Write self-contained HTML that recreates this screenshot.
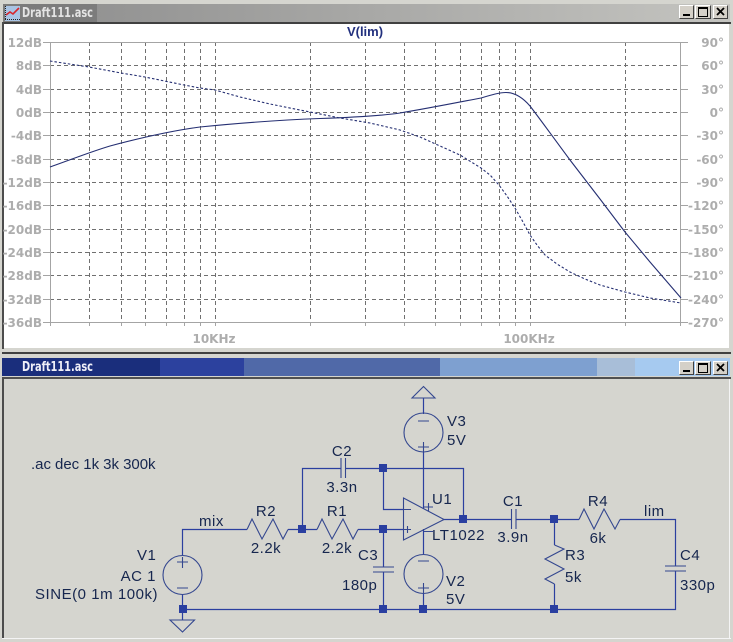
<!DOCTYPE html>
<html><head><meta charset="utf-8"><title>Draft111.asc</title>
<style>
html,body{margin:0;padding:0;background:#d5d5cf;width:733px;height:642px;overflow:hidden}
svg{display:block;position:absolute;left:0;top:0}
.ax{font:bold 12px "DejaVu Sans","Liberation Sans",sans-serif;fill:#adadad}
.s{font:15px "Liberation Sans",sans-serif;fill:#16264e;letter-spacing:.5px}
.t{font:bold 13px "DejaVu Sans","Liberation Sans",sans-serif}
</style></head><body>
<svg width="733" height="642" viewBox="0 0 733 642">
<defs>
<linearGradient id="g" x1="0" x2="1" y1="0" y2="0"><stop offset="0" stop-color="#8c8c8c"/><stop offset="1" stop-color="#c4c4c0"/></linearGradient>
</defs>
<rect width="733" height="642" fill="#d5d5cf"/>
<!-- top window -->
<rect x="3" y="4" width="727" height="18" fill="url(#g)"/>
<rect x="3" y="4" width="94" height="18" fill="#7c7c7c"/>
<rect x="2" y="22" width="729" height="2" fill="#404040"/>
<rect x="2" y="22" width="2" height="327" fill="#4c4c4c"/>
<rect x="4" y="24" width="725" height="324" fill="#fff"/>
<rect x="5" y="6" width="15" height="15" fill="#a9c4e4"/>
<path d="M6 15L10 12L13 14L19 8" fill="none" stroke="#d8262c" stroke-width="1.6"/>
<path d="M5 19.500H20" stroke="#222" stroke-dasharray="1 1"/>
<path d="M5.500 6V20" stroke="#222" stroke-dasharray="1 1"/>
<text class="t" x="22" y="17" fill="#e4e4e4" textLength="71" lengthAdjust="spacingAndGlyphs">Draft111.asc</text>
<!-- grid -->
<g stroke="#707070" stroke-width="1" stroke-dasharray="4 3" fill="none" shape-rendering="crispEdges">
<path d="M50 65.500H681M50 89.500H681M50 112.500H681M50 135.500H681M50 159.500H681M50 182.500H681M50 205.500H681M50 229.500H681M50 252.500H681M50 275.500H681M50 299.500H681"/>
<path d="M89.500 42V322M121.500 42V322M145.500 42V322M166.500 42V322M184.500 42V322M200.500 42V322M215.500 42V322M310.500 42V322M365.500 42V322M404.500 42V322M435.500 42V322M460.500 42V322M481.500 42V322M499.500 42V322M515.500 42V322M530.500 42V322M625.500 42V322"/>
</g>
<g stroke="#a4a4a4" stroke-width="1" fill="none" shape-rendering="crispEdges">
<path d="M50.500 42.500H680.500V322.500H50.500Z"/>
<path d="M43 42.500H50M43 65.500H50M43 89.500H50M43 112.500H50M43 135.500H50M43 159.500H50M43 182.500H50M43 205.500H50M43 229.500H50M43 252.500H50M43 275.500H50M43 299.500H50M43 322.500H50"/>
<path d="M681 42.500H688M681 65.500H688M681 89.500H688M681 112.500H688M681 135.500H688M681 159.500H688M681 182.500H688M681 205.500H688M681 229.500H688M681 252.500H688M681 275.500H688M681 299.500H688M681 322.500H688"/>
<path d="M50.500 322V326M89.500 322V326M121.500 322V326M145.500 322V326M166.500 322V326M184.500 322V326M200.500 322V326M215.500 322V326M310.500 322V326M365.500 322V326M404.500 322V326M435.500 322V326M460.500 322V326M481.500 322V326M499.500 322V326M515.500 322V326M530.500 322V326M625.500 322V326M680.500 322V326"/>
</g>
<!-- axis labels -->
<g class="ax" text-anchor="end">
<text x="42" y="47">12dB</text><text x="42" y="70">8dB</text><text x="42" y="94">4dB</text><text x="42" y="117">0dB</text>
<text x="42" y="140">-4dB</text><text x="42" y="164">-8dB</text><text x="42" y="187">-12dB</text><text x="42" y="210">-16dB</text>
<text x="42" y="234">-20dB</text><text x="42" y="257">-24dB</text><text x="42" y="280">-28dB</text><text x="42" y="304">-32dB</text><text x="42" y="327">-36dB</text>
<text x="724" y="47">90°</text><text x="724" y="70">60°</text><text x="724" y="94">30°</text><text x="724" y="117">0°</text>
<text x="724" y="140">-30°</text><text x="724" y="164">-60°</text><text x="724" y="187">-90°</text><text x="724" y="210">-120°</text>
<text x="724" y="234">-150°</text><text x="724" y="257">-180°</text><text x="724" y="280">-210°</text><text x="724" y="304">-240°</text><text x="724" y="327">-270°</text>
</g>
<text class="ax" x="214" y="343" text-anchor="middle">10KHz</text>
<text class="ax" x="529" y="343" text-anchor="middle">100KHz</text>
<text x="365" y="36" text-anchor="middle" style="font:bold 13px 'Liberation Sans',sans-serif" fill="#22307e">V(lim)</text>
<!-- traces -->
<path d="M50 167C70 160 90 152 110 146C140 138 170 131 200 127C240 123 280 120 320 118.500C350 117.500 380 116 400 113C430 108 460 102 481 98C491 95 499 92.500 506 92.500C515 92.500 523 98 530 106C540 119 550 133 570 160L600 199L625 232L650 262L681 298" fill="none" stroke="#252f72" stroke-width="1.100"/>
<path d="M50 61L89 67L121 73L145 77L184 85L200 88L215 90L240 97L270 104L300 110L340 118L370 123L400 130L420 137L440 146L460 155L481 168L490 175L499 185L507 196L515 208L523 222L530 235L537 245L545 255L557 264L570 272L585 279L600 285L625 292L650 298L681 303" fill="none" stroke="#252f72" stroke-width="1.100" stroke-dasharray="2.500 2"/>
<!-- top buttons -->
<g shape-rendering="crispEdges">
<rect x="679" y="5" width="15" height="14" fill="#d4d0c8"/><path d="M679.500 18.500V5.500H693.500" fill="none" stroke="#fff"/><path d="M679.500 18.500H693.500V5.500" fill="none" stroke="#404040"/>
<rect x="683" y="14" width="7" height="2" fill="#000"/>
<rect x="695" y="5" width="16" height="14" fill="#d4d0c8"/><path d="M695.500 18.500V5.500H710.500" fill="none" stroke="#fff"/><path d="M695.500 18.500H710.500V5.500" fill="none" stroke="#404040"/>
<rect x="698.500" y="7.500" width="9" height="9" fill="none" stroke="#000"/><rect x="698" y="7" width="10" height="2" fill="#000"/>
<rect x="713" y="5" width="15" height="14" fill="#d4d0c8"/><path d="M713.500 18.500V5.500H727.500" fill="none" stroke="#fff"/><path d="M713.500 18.500H727.500V5.500" fill="none" stroke="#404040"/>
</g>
<path d="M717 8L724 15M724 8L717 15" stroke="#000" stroke-width="1.800"/>
<!-- bottom window -->
<rect x="0" y="349" width="733" height="293" fill="#d5d5cf"/>
<rect x="2" y="352" width="729" height="2" fill="#404040"/>
<rect x="2" y="358" width="158" height="18" fill="#1a2e7c"/>
<rect x="160" y="358" width="84" height="18" fill="#2c419e"/>
<rect x="244" y="358" width="196" height="18" fill="#5069a8"/>
<rect x="440" y="358" width="157" height="18" fill="#7ea0d0"/>
<rect x="597" y="358" width="38" height="18" fill="#a8bed8"/>
<rect x="635" y="358" width="95" height="18" fill="#a6caf0"/>
<rect x="2" y="377" width="729" height="2" fill="#505050"/>
<rect x="2" y="377" width="2" height="262" fill="#4c4c4c"/>
<rect x="729" y="379" width="1" height="260" fill="#f4f4f4"/>
<rect x="2" y="638" width="729" height="1" fill="#f4f4f4"/>
<rect x="0" y="639" width="733" height="3" fill="#d5d5cf"/>
<text class="t" x="22" y="371" fill="#f0f0f8" textLength="71" lengthAdjust="spacingAndGlyphs">Draft111.asc</text>
<g shape-rendering="crispEdges">
<rect x="679" y="361" width="15" height="14" fill="#d4d0c8"/><path d="M679.500 374.500V361.500H693.500" fill="none" stroke="#fff"/><path d="M679.500 374.500H693.500V361.500" fill="none" stroke="#404040"/>
<rect x="683" y="370" width="7" height="2" fill="#000"/>
<rect x="695" y="361" width="16" height="14" fill="#d4d0c8"/><path d="M695.500 374.500V361.500H710.500" fill="none" stroke="#fff"/><path d="M695.500 374.500H710.500V361.500" fill="none" stroke="#404040"/>
<rect x="698.500" y="363.500" width="9" height="9" fill="none" stroke="#000"/><rect x="698" y="363" width="10" height="2" fill="#000"/>
<rect x="713" y="361" width="15" height="14" fill="#d4d0c8"/><path d="M713.500 374.500V361.500H727.500" fill="none" stroke="#fff"/><path d="M713.500 374.500H727.500V361.500" fill="none" stroke="#404040"/>
</g>
<path d="M717 364L724 371M724 364L717 371" stroke="#000" stroke-width="1.800"/>
<!-- wires -->
<g fill="none" stroke="#2b3f9f" stroke-width="1.200">
<path d="M182.500 555V529.500H247M288 529.500H317M358 529.500H403"/>
<path d="M302.500 529.500V468.500H341M346 468.500H463.500V519.500"/>
<path d="M383.500 468.500V509.500H403"/>
<path d="M383.500 529.500V567M383.500 572V609.500"/>
<path d="M423.500 398V414M423.500 452V509M423.500 529V554M423.500 593V609"/>
<path d="M443 519.500H511M516 519.500H579M620 519.500H675.500V566M675.500 571V609.500H182.500"/>
<path d="M554.500 519.500V545M554.500 584V609.500"/>
<path d="M182.500 594V620"/>
</g>
<g fill="none" stroke="#34478f" stroke-width="1.100">
<path d="M423.500 398L412 398L423.500 386.500L435 398Z"/>
<path d="M170 620H194.500L182.500 632Z"/>
<circle cx="423.500" cy="432.500" r="19.500"/>
<circle cx="423.500" cy="574" r="19.500"/>
<circle cx="182.500" cy="575" r="19.500"/>
<path d="M418 421H429M418 447H429M423.500 442V452"/>
<path d="M418 561H429M418 588H429M423.500 583V593"/>
<path d="M177 562H188M182.500 557V568M177 588H188"/>
<path d="M403.500 498L444 519.500L403.500 540Z"/>
<path d="M404 509.500H411M404 529.500H411M407.500 526V533"/>
<path d="M424 507H433M428.500 503V511M424 531.500H433"/>
<path d="M317 529.500L322 519L332 539L343 519L353 539L358 529.500"/>
<path d="M247 529.500L252 519L262 539L273 519L283 539L288 529.500"/>
<path d="M579 519.500L584 509L594 529L604 509L615 529L620 519.500"/>
<path d="M554.500 545L564 549L545 559L564 569L545 579L554.500 584"/>
<path d="M341 458V478M345.500 458V478"/>
<path d="M511.500 509V529M516 509V529"/>
<path d="M373 567H394M373 572H394"/>
<path d="M665 566H686M665 571H686"/>
</g>
<g fill="#2a3fa0" shape-rendering="crispEdges">
<rect x="298" y="525" width="8" height="8"/><rect x="379" y="525" width="8" height="8"/>
<rect x="379" y="464" width="8" height="8"/><rect x="459" y="515" width="8" height="8"/>
<rect x="550" y="515" width="8" height="8"/><rect x="179" y="605" width="8" height="8"/>
<rect x="379" y="605" width="8" height="8"/><rect x="419" y="605" width="8" height="8"/>
<rect x="550" y="605" width="8" height="8"/>
</g>
<!-- schematic text -->
<g class="s">
<text x="31" y="469" textLength="125">.ac dec 1k 3k 300k</text>
<text x="35" y="599" textLength="123">SINE(0 1m 100k)</text>
<text x="137" y="560">V1</text>
<text x="156" y="581" text-anchor="end">AC 1</text>
<text x="199" y="526">mix</text>
<text x="266" y="516" text-anchor="middle">R2</text>
<text x="266" y="553" text-anchor="middle">2.2k</text>
<text x="337" y="516" text-anchor="middle">R1</text>
<text x="337" y="553" text-anchor="middle">2.2k</text>
<text x="342" y="456" text-anchor="middle">C2</text>
<text x="342" y="492" text-anchor="middle">3.3n</text>
<text x="358" y="560">C3</text>
<text x="342" y="590">180p</text>
<text x="432" y="504">U1</text>
<text x="432" y="540" textLength="53">LT1022</text>
<text x="447" y="426">V3</text>
<text x="447" y="445">5V</text>
<text x="446" y="586">V2</text>
<text x="446" y="604">5V</text>
<text x="513" y="506" text-anchor="middle">C1</text>
<text x="513" y="542" text-anchor="middle">3.9n</text>
<text x="598" y="506" text-anchor="middle">R4</text>
<text x="598" y="543" text-anchor="middle">6k</text>
<text x="644" y="516">lim</text>
<text x="565" y="560">R3</text>
<text x="565" y="582">5k</text>
<text x="680" y="560">C4</text>
<text x="680" y="590">330p</text>
</g>
</svg>
</body></html>
